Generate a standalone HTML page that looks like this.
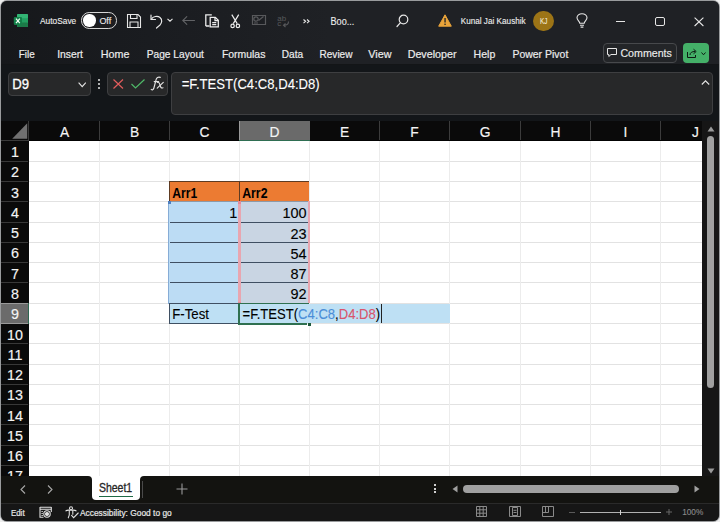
<!DOCTYPE html><html><head><meta charset="utf-8"><style>
*{margin:0;padding:0;box-sizing:border-box}
html,body{width:720px;height:522px;overflow:hidden;background:#eeeeee}
#ring{position:absolute;left:0;top:0;width:720px;height:522px;border-radius:7px;background:#999b9d}
body{position:relative;font-family:"Liberation Sans",sans-serif}
#win{position:absolute;left:1px;top:1px;width:718px;height:520px;border-radius:6px;background:#1f2125;overflow:hidden}
#c{position:absolute;left:-1px;top:-1px;width:720px;height:522px}
.a{position:absolute}
svg{position:absolute;overflow:visible}
#txt{left:0;top:0;font-family:"Liberation Sans",sans-serif}
</style></head><body><div id="ring"></div><div id="win"><div id="c">
<div class="a" style="left:0px;top:0px;width:720px;height:65px;background:linear-gradient(90deg,#16181b 0px,#1a1c20 150px,#1f2125 330px,#1f2125 720px)"></div>
<div class="a" style="left:0px;top:64px;width:720px;height:1px;background:#131517"></div>
<div class="a" style="left:0px;top:65px;width:720px;height:56px;background:#131619"></div>
<svg style="left:13px;top:13px" width="16" height="15" viewBox="0 0 16 15" ><rect x="4" y="0.9" width="11" height="13.2" rx="1.2" fill="#23a061"/>
<rect x="4" y="0.9" width="11" height="4.4" rx="1.2" fill="#33b574"/>
<rect x="4" y="9.6" width="11" height="4.5" rx="1" fill="#1c7a48"/>
<rect x="0.8" y="3.9" width="8.2" height="8" rx="1.1" fill="#138049"/>
<path d="M3 5.6 L6.8 10.2 M6.8 5.6 L3 10.2" stroke="#f0fff4" stroke-width="1.2"/></svg>
<div class="a" style="left:80.8px;top:12.4px;width:36.4px;height:16.4px;border:1.4px solid #d6d6d6;border-radius:8.2px;background:#1c1d20"></div>
<div class="a" style="left:83.3px;top:14.4px;width:12.4px;height:12.4px;background:#fff;border-radius:50%"></div>
<svg style="left:126px;top:13px" width="16" height="16" viewBox="0 0 16 16" fill="none" stroke="#e6e6e6" stroke-width="1.1"><path d="M1.5 1.5 H12 L14.5 4 V14.5 H1.5 Z"/><path d="M4.5 1.5 V5.5 H11 V1.5"/><path d="M4 14.5 V9 H12 V14.5"/></svg>
<svg style="left:149px;top:13px" width="16" height="16" viewBox="0 0 16 16" fill="none" stroke="#e6e6e6" stroke-width="1.2" stroke-linecap="round" stroke-linejoin="round"><path d="M2 2 V6.5 H6.5"/><path d="M2.3 6.3 C4 3.3 8.5 2.5 11 4.5 C13.5 6.5 13 10 11 12 L7.5 15"/></svg>
<svg style="left:167px;top:18px" width="6" height="4" viewBox="0 0 6 4" fill="none" stroke="#e6e6e6" stroke-width="1.1"><path d="M0.5 0.8 L3 3.2 L5.5 0.8"/></svg>
<svg style="left:181.5px;top:16px" width="13" height="9" viewBox="0 0 13 9" fill="none" stroke="#626366" stroke-width="1.1" stroke-linecap="round"><path d="M12.5 4.5 H0.8 M4.8 0.6 L0.8 4.5 L4.8 8.4"/></svg>
<svg style="left:204px;top:13px" width="16" height="16" viewBox="0 0 16 16" fill="none" stroke="#ececec" stroke-width="1.3"><path d="M1.8 13 V1.8 H7.8"/><path d="M1.8 13 H5.5"/><path d="M6.2 4.3 H11.3 L14.3 7.3 V13.9 H6.2 Z"/><path d="M11 4.5 V7.6 H14"/><path d="M8.2 9.6 H12.3 M8.2 11.6 H12.3"/></svg>
<svg style="left:230px;top:13.5px" width="10.5" height="15" viewBox="0 0 10.5 15" fill="none" stroke="#ececec" stroke-width="1.2"><path d="M1.8 0.6 L7.2 9.6 M8.7 0.6 L3.3 9.6"/><circle cx="2.6" cy="11.9" r="1.7"/><circle cx="7.9" cy="11.9" r="1.7"/></svg>
<svg style="left:251px;top:14px" width="16" height="12" viewBox="0 0 16 12" fill="none" stroke="#58595c" stroke-width="1.2"><path d="M1.5 1.5 H14.5 V10.5 H1.5 Z"/><circle cx="5" cy="5" r="2.2"/><path d="M7.5 6.5 L12.5 2.5"/><path d="M3 9 H7"/></svg>
<svg style="left:277px;top:14px" width="13" height="13" viewBox="0 0 13 13" ><text x="0.3" y="6.8" font-size="8" fill="#58595c" font-family="Liberation Sans">ab</text><text x="0.3" y="12.3" font-size="8" fill="#58595c" font-family="Liberation Sans">c</text><path d="M11.5 7.5 C11.5 10 10 11.3 7 11.3 M8.5 9.5 L6.5 11.3 L8.5 13" fill="none" stroke="#58595c" stroke-width="1.1"/></svg>
<svg style="left:302.5px;top:19.2px" width="7" height="4.6" viewBox="0 0 7 4.6" fill="none" stroke="#e6e6e6" stroke-width="1.1"><path d="M0.5 0.5 L2.6 2.3 L0.5 4.1 M4 0.5 L6.1 2.3 L4 4.1"/></svg>
<svg style="left:396px;top:14px" width="13" height="14" viewBox="0 0 13 14" fill="none" stroke="#e6e6e6" stroke-width="1.2"><circle cx="7.5" cy="5.5" r="4.3"/><path d="M4.5 8.7 L1 12.5" stroke-linecap="round"/></svg>
<svg style="left:438px;top:14px" width="14" height="13" viewBox="0 0 14 13" ><path d="M7 0.8 L13.3 12.2 H0.7 Z" fill="#e9a43a" stroke="#e9a43a" stroke-linejoin="round"/><rect x="6.4" y="4" width="1.3" height="4.5" fill="#1f2125"/><rect x="6.4" y="9.6" width="1.3" height="1.4" fill="#1f2125"/></svg>
<div class="a" style="left:533.3px;top:10.7px;width:20.8px;height:20.8px;background:#9c7416;border-radius:50%"></div>
<svg style="left:575.5px;top:13px" width="12" height="15" viewBox="0 0 12 15" fill="none" stroke="#e6e6e6" stroke-width="1.1"><path d="M3.8 10.3 C3.8 8.3 1 7.3 1 4.8 C1 2.4 3.2 0.8 6 0.8 C8.8 0.8 11 2.4 11 4.8 C11 7.3 8.2 8.3 8.2 10.3 Z"/><path d="M4 12.2 H8 M4.6 14.1 H7.4"/></svg>
<div class="a" style="left:615.5px;top:20.5px;width:9.5px;height:1.1px;background:#e6e6e6"></div>
<div class="a" style="left:655px;top:16.5px;width:9.5px;height:9px;border:1.1px solid #e6e6e6;border-radius:2px"></div>
<svg style="left:694px;top:16.5px" width="10" height="9.5" viewBox="0 0 10 9.5" stroke="#e6e6e6" stroke-width="1.1"><path d="M0.6 0.6 L9.4 9 M9.4 0.6 L0.6 9"/></svg>
<div class="a" style="left:603px;top:43px;width:74px;height:19.5px;border:1px solid #47494c;border-radius:4px;background:#232528"></div>
<svg style="left:607px;top:48px" width="10" height="9" viewBox="0 0 10 9" fill="none" stroke="#e6e6e6" stroke-width="1"><path d="M0.5 0.5 H9.5 V6.5 H4 L1.8 8.5 V6.5 H0.5 Z"/></svg>
<div class="a" style="left:683px;top:43px;width:26px;height:19.5px;background:#44b068;border-radius:4px"></div>
<svg style="left:687px;top:48px" width="10" height="10" viewBox="0 0 10 10" fill="none" stroke="#0d1a12" stroke-width="1"><path d="M0.5 4 V9.5 H8.5 V7"/><path d="M3 7 C3 4.5 5 3.5 8 3.5 M6.5 1.2 L9.2 3.5 L6.5 5.8"/></svg>
<svg style="left:701px;top:52px" width="5" height="3.5" viewBox="0 0 5 3.5" fill="none" stroke="#0d1a12" stroke-width="1"><path d="M0.5 0.5 L2.5 2.8 L4.5 0.5"/></svg>
<div class="a" style="left:7.5px;top:72px;width:83.5px;height:23.6px;border:1px solid #3e3f41;border-radius:4px;background:#272829"></div>
<svg style="left:78px;top:82px" width="9" height="5.5" viewBox="0 0 9 5.5" fill="none" stroke="#e6e6e6" stroke-width="1.1"><path d="M0.6 0.6 L4.2 4.6 L7.8 0.6"/></svg>
<div class="a" style="left:98.2px;top:79.2px;width:2.2px;height:2.2px;background:#e6e6e6;border-radius:50%"></div>
<div class="a" style="left:98.2px;top:83.2px;width:2.2px;height:2.2px;background:#e6e6e6;border-radius:50%"></div>
<div class="a" style="left:98.2px;top:87.2px;width:2.2px;height:2.2px;background:#e6e6e6;border-radius:50%"></div>
<div class="a" style="left:107px;top:72px;width:61px;height:23.6px;border:1px solid #3e3f41;border-radius:4px;background:#272829"></div>
<svg style="left:113px;top:79px" width="11" height="10" viewBox="0 0 11 10" stroke="#e05c5c" stroke-width="1.2"><path d="M0.5 0.5 L10 9.5 M10 0.5 L0.5 9.5"/></svg>
<svg style="left:131px;top:79px" width="14" height="10" viewBox="0 0 14 10" fill="none" stroke="#4fb868" stroke-width="1.2"><path d="M0.5 5 L4.5 9 L13.5 0.5"/></svg>
<svg style="left:150px;top:76px" width="15" height="15" viewBox="0 0 15 15" fill="none" stroke="#e2e2e2" stroke-width="1.15" stroke-linecap="round"><path d="M1.2 13.4 C2.2 14.2 3.4 13.8 3.9 12 L6.1 3.6 C6.6 1.7 8.1 0.7 10.3 1.4"/><path d="M4.2 5.6 H8.6"/><path d="M7.6 6.5 C8.4 6 9 6.4 9.4 7.4 L10.6 10.8 C11 11.9 11.8 12.3 13 11.8"/><path d="M13.3 6.4 L7.2 12.2"/></svg>
<div class="a" style="left:171px;top:72px;width:542px;height:43px;border:1px solid #3e3f41;border-radius:4px;background:#272829"></div>
<svg style="left:700.5px;top:80px" width="9" height="5" viewBox="0 0 9 5" fill="none" stroke="#e6e6e6" stroke-width="1.1"><path d="M0.8 4.5 L4.5 0.8 L8.2 4.5"/></svg>
<svg style="left:0;top:0" width="720" height="522" viewBox="0 0 720 522"><text x="40.00" y="24.00" font-size="8.72" fill="#ececec" stroke="#ececec" stroke-width="0.12" textLength="36.20" lengthAdjust="spacingAndGlyphs">AutoSave</text><text x="99.40" y="24.00" font-size="9.30" fill="#ececec" stroke="#ececec" stroke-width="0.12" textLength="11.78" lengthAdjust="spacingAndGlyphs">Off</text><text x="330.50" y="25.00" font-size="11.19" fill="#ececec" stroke="#ececec" stroke-width="0.12" textLength="23.80" lengthAdjust="spacingAndGlyphs">Boo...</text><text x="460.70" y="24.20" font-size="9.01" fill="#ececec" stroke="#ececec" stroke-width="0.12" textLength="64.99" lengthAdjust="spacingAndGlyphs">Kunal Jai Kaushik</text><text x="540.00" y="24.30" font-size="9.59" fill="#f3ead8" stroke="#f3ead8" stroke-width="0.12" textLength="7.30" lengthAdjust="spacingAndGlyphs">KJ</text><text x="18.80" y="57.80" font-size="11.48" fill="#ececec" stroke="#ececec" stroke-width="0.2" textLength="16.00" lengthAdjust="spacingAndGlyphs">File</text><text x="57.20" y="57.80" font-size="11.48" fill="#ececec" stroke="#ececec" stroke-width="0.2" textLength="25.80" lengthAdjust="spacingAndGlyphs">Insert</text><text x="100.80" y="57.80" font-size="11.48" fill="#ececec" stroke="#ececec" stroke-width="0.2" textLength="28.59" lengthAdjust="spacingAndGlyphs">Home</text><text x="146.70" y="57.80" font-size="11.48" fill="#ececec" stroke="#ececec" stroke-width="0.2" textLength="57.20" lengthAdjust="spacingAndGlyphs">Page Layout</text><text x="221.90" y="57.80" font-size="11.48" fill="#ececec" stroke="#ececec" stroke-width="0.2" textLength="43.49" lengthAdjust="spacingAndGlyphs">Formulas</text><text x="281.80" y="57.80" font-size="11.48" fill="#ececec" stroke="#ececec" stroke-width="0.2" textLength="21.29" lengthAdjust="spacingAndGlyphs">Data</text><text x="319.50" y="57.80" font-size="11.48" fill="#ececec" stroke="#ececec" stroke-width="0.2" textLength="32.97" lengthAdjust="spacingAndGlyphs">Review</text><text x="368.30" y="57.80" font-size="11.48" fill="#ececec" stroke="#ececec" stroke-width="0.2" textLength="23.17" lengthAdjust="spacingAndGlyphs">View</text><text x="407.70" y="57.80" font-size="11.48" fill="#ececec" stroke="#ececec" stroke-width="0.2" textLength="48.80" lengthAdjust="spacingAndGlyphs">Developer</text><text x="473.60" y="57.80" font-size="11.48" fill="#ececec" stroke="#ececec" stroke-width="0.2" textLength="21.70" lengthAdjust="spacingAndGlyphs">Help</text><text x="512.40" y="57.80" font-size="11.48" fill="#ececec" stroke="#ececec" stroke-width="0.2" textLength="55.91" lengthAdjust="spacingAndGlyphs">Power Pivot</text><text x="620.40" y="57.30" font-size="11.63" fill="#ececec" stroke="#ececec" stroke-width="0.15" textLength="51.49" lengthAdjust="spacingAndGlyphs">Comments</text><text x="12.30" y="89.10" font-size="14.97" fill="#fff" stroke="#fff" stroke-width="0.3" textLength="16.80" lengthAdjust="spacingAndGlyphs">D9</text><text x="181.70" y="89.00" font-size="14.83" fill="#fff" stroke="#fff" stroke-width="0.12" textLength="138.00" lengthAdjust="spacingAndGlyphs">=F.TEST(C4:C8,D4:D8)</text></svg>
<div class="a" style="left:0px;top:121px;width:720px;height:355px;background:#161616"></div>
<div class="a" style="left:0px;top:121px;width:702px;height:20px;background:#0a0a0a"></div>
<div class="a" style="left:0px;top:141px;width:29px;height:335px;background:#0a0a0a"></div>
<div class="a" style="left:29px;top:141px;width:673px;height:335px;background:#fff"></div>
<svg style="left:12px;top:123px" width="16" height="16" viewBox="0 0 16 16" ><path d="M15.2 0.2 V15.8 H0.2 Z" fill="#707070"/></svg>
<div class="a" style="left:99px;top:121px;width:1px;height:20px;background:#3c3c3c"></div>
<div class="a" style="left:169px;top:121px;width:1px;height:20px;background:#3c3c3c"></div>
<div class="a" style="left:239px;top:121px;width:1px;height:20px;background:#3c3c3c"></div>
<div class="a" style="left:309px;top:121px;width:1px;height:20px;background:#3c3c3c"></div>
<div class="a" style="left:379px;top:121px;width:1px;height:20px;background:#3c3c3c"></div>
<div class="a" style="left:449px;top:121px;width:1px;height:20px;background:#3c3c3c"></div>
<div class="a" style="left:520px;top:121px;width:1px;height:20px;background:#3c3c3c"></div>
<div class="a" style="left:590px;top:121px;width:1px;height:20px;background:#3c3c3c"></div>
<div class="a" style="left:660px;top:121px;width:1px;height:20px;background:#3c3c3c"></div>
<div class="a" style="left:29px;top:140px;width:673px;height:1px;background:#030303"></div>
<div class="a" style="left:0px;top:140px;width:28px;height:1px;background:#3a3a3a"></div>
<div class="a" style="left:28px;top:121px;width:1px;height:20px;background:#3a3a3a"></div>
<div class="a" style="left:0px;top:161px;width:28px;height:1px;background:#383838"></div>
<div class="a" style="left:29px;top:161px;width:673px;height:1px;background:#e2e2e2"></div>
<div class="a" style="left:0px;top:181px;width:28px;height:1px;background:#383838"></div>
<div class="a" style="left:29px;top:181px;width:673px;height:1px;background:#e2e2e2"></div>
<div class="a" style="left:0px;top:201px;width:28px;height:1px;background:#383838"></div>
<div class="a" style="left:29px;top:201px;width:673px;height:1px;background:#e2e2e2"></div>
<div class="a" style="left:0px;top:222px;width:28px;height:1px;background:#383838"></div>
<div class="a" style="left:29px;top:222px;width:673px;height:1px;background:#e2e2e2"></div>
<div class="a" style="left:0px;top:242px;width:28px;height:1px;background:#383838"></div>
<div class="a" style="left:29px;top:242px;width:673px;height:1px;background:#e2e2e2"></div>
<div class="a" style="left:0px;top:262px;width:28px;height:1px;background:#383838"></div>
<div class="a" style="left:29px;top:262px;width:673px;height:1px;background:#e2e2e2"></div>
<div class="a" style="left:0px;top:282px;width:28px;height:1px;background:#383838"></div>
<div class="a" style="left:29px;top:282px;width:673px;height:1px;background:#e2e2e2"></div>
<div class="a" style="left:0px;top:303px;width:28px;height:1px;background:#383838"></div>
<div class="a" style="left:29px;top:303px;width:673px;height:1px;background:#e2e2e2"></div>
<div class="a" style="left:0px;top:323px;width:28px;height:1px;background:#383838"></div>
<div class="a" style="left:29px;top:323px;width:673px;height:1px;background:#e2e2e2"></div>
<div class="a" style="left:0px;top:343px;width:28px;height:1px;background:#383838"></div>
<div class="a" style="left:29px;top:343px;width:673px;height:1px;background:#e2e2e2"></div>
<div class="a" style="left:0px;top:364px;width:28px;height:1px;background:#383838"></div>
<div class="a" style="left:29px;top:364px;width:673px;height:1px;background:#e2e2e2"></div>
<div class="a" style="left:0px;top:384px;width:28px;height:1px;background:#383838"></div>
<div class="a" style="left:29px;top:384px;width:673px;height:1px;background:#e2e2e2"></div>
<div class="a" style="left:0px;top:404px;width:28px;height:1px;background:#383838"></div>
<div class="a" style="left:29px;top:404px;width:673px;height:1px;background:#e2e2e2"></div>
<div class="a" style="left:0px;top:424px;width:28px;height:1px;background:#383838"></div>
<div class="a" style="left:29px;top:424px;width:673px;height:1px;background:#e2e2e2"></div>
<div class="a" style="left:0px;top:445px;width:28px;height:1px;background:#383838"></div>
<div class="a" style="left:29px;top:445px;width:673px;height:1px;background:#e2e2e2"></div>
<div class="a" style="left:0px;top:465px;width:28px;height:1px;background:#383838"></div>
<div class="a" style="left:29px;top:465px;width:673px;height:1px;background:#e2e2e2"></div>
<div class="a" style="left:99px;top:141px;width:1px;height:335px;background:#ececec"></div>
<div class="a" style="left:169px;top:141px;width:1px;height:335px;background:#ececec"></div>
<div class="a" style="left:239px;top:141px;width:1px;height:335px;background:#ececec"></div>
<div class="a" style="left:309px;top:141px;width:1px;height:335px;background:#ececec"></div>
<div class="a" style="left:379px;top:141px;width:1px;height:335px;background:#ececec"></div>
<div class="a" style="left:449px;top:141px;width:1px;height:335px;background:#ececec"></div>
<div class="a" style="left:520px;top:141px;width:1px;height:335px;background:#ececec"></div>
<div class="a" style="left:590px;top:141px;width:1px;height:335px;background:#ececec"></div>
<div class="a" style="left:660px;top:141px;width:1px;height:335px;background:#ececec"></div>
<div class="a" style="left:239px;top:121px;width:71px;height:19px;background:#6a6a6a"></div>
<div class="a" style="left:239px;top:121px;width:1px;height:19px;background:#9a9a9a"></div>
<div class="a" style="left:239px;top:140px;width:71px;height:1px;background:#2f6e52"></div>
<div class="a" style="left:0px;top:303px;width:28px;height:21px;background:#6b6b6b"></div>
<div class="a" style="left:0px;top:303px;width:28px;height:1px;background:#9a9a9a"></div>
<div class="a" style="left:0px;top:323px;width:28px;height:1px;background:#9a9a9a"></div>
<div class="a" style="left:28px;top:303px;width:1px;height:21px;background:#2f6650"></div>
<div class="a" style="left:169px;top:182px;width:140px;height:19px;background:#ec7b32"></div>
<div class="a" style="left:169px;top:181px;width:140px;height:1px;background:#5e3b22"></div>
<div class="a" style="left:169px;top:181px;width:1px;height:20px;background:#5e3b22"></div>
<div class="a" style="left:239px;top:181px;width:1px;height:20px;background:#5e3b22"></div>
<div class="a" style="left:169px;top:201px;width:140px;height:1px;background:#8d99a6"></div>
<div class="a" style="left:168px;top:202px;width:71px;height:101px;background:#bcdcf4"></div>
<div class="a" style="left:239px;top:202px;width:70px;height:101px;background:#c9d5e3"></div>
<div class="a" style="left:170px;top:222px;width:139px;height:1px;background:#3f4f62"></div>
<div class="a" style="left:170px;top:242px;width:139px;height:1px;background:#3f4f62"></div>
<div class="a" style="left:170px;top:262px;width:139px;height:1px;background:#3f4f62"></div>
<div class="a" style="left:170px;top:282px;width:139px;height:1px;background:#3f4f62"></div>
<div class="a" style="left:170px;top:303px;width:69px;height:1px;background:#3f4f62"></div>
<div class="a" style="left:169px;top:304px;width:281px;height:19px;background:#bee0f4"></div>
<div class="a" style="left:169px;top:303px;width:1px;height:21px;background:#3f4f62"></div>
<div class="a" style="left:169px;top:323px;width:70px;height:1px;background:#3f4f62"></div>
<div class="a" style="left:168px;top:202px;width:1px;height:102px;background:#86acd6"></div>
<div class="a" style="left:168px;top:201px;width:2.5px;height:2.5px;background:#4f7fc0"></div>
<div class="a" style="left:238px;top:201px;width:3px;height:102px;background:#e8a6b0"></div>
<div class="a" style="left:308px;top:201px;width:2px;height:102px;background:#e8a6b0"></div>
<div class="a" style="left:238px;top:200.5px;width:3px;height:3px;background:#e48a9a"></div>
<div class="a" style="left:238px;top:302px;width:3px;height:2px;background:#e48a9a"></div>
<div class="a" style="left:239px;top:303px;width:70px;height:1px;background:#2f7050"></div>
<div class="a" style="left:238px;top:303px;width:2px;height:22px;background:#2f7050"></div>
<div class="a" style="left:238px;top:323px;width:69px;height:2px;background:#2f7050"></div>
<div class="a" style="left:308px;top:323px;width:3px;height:3px;background:#1f5a3c"></div>
<div class="a" style="left:381.2px;top:304px;width:1.1px;height:19px;background:#222"></div>
<svg style="left:0;top:0" width="720" height="522" viewBox="0 0 720 522"><defs><clipPath id="gc"><rect x="0" y="121" width="702" height="355"/></clipPath></defs><g clip-path="url(#gc)"><text x="59.90" y="136.60" font-size="13.80" fill="#f4f4f4" stroke="#f4f4f4" stroke-width="0.15" textLength="9.20" lengthAdjust="spacingAndGlyphs">A</text><text x="129.90" y="136.60" font-size="13.80" fill="#f4f4f4" stroke="#f4f4f4" stroke-width="0.15" textLength="9.20" lengthAdjust="spacingAndGlyphs">B</text><text x="199.52" y="136.60" font-size="13.80" fill="#f4f4f4" stroke="#f4f4f4" stroke-width="0.15" textLength="9.97" lengthAdjust="spacingAndGlyphs">C</text><text x="269.52" y="136.60" font-size="13.80" fill="#f4f4f4" stroke="#f4f4f4" stroke-width="0.15" textLength="9.97" lengthAdjust="spacingAndGlyphs">D</text><text x="339.90" y="136.60" font-size="13.80" fill="#f4f4f4" stroke="#f4f4f4" stroke-width="0.15" textLength="9.20" lengthAdjust="spacingAndGlyphs">E</text><text x="410.28" y="136.60" font-size="13.80" fill="#f4f4f4" stroke="#f4f4f4" stroke-width="0.15" textLength="8.43" lengthAdjust="spacingAndGlyphs">F</text><text x="479.63" y="136.60" font-size="13.80" fill="#f4f4f4" stroke="#f4f4f4" stroke-width="0.15" textLength="10.73" lengthAdjust="spacingAndGlyphs">G</text><text x="550.52" y="136.60" font-size="13.80" fill="#f4f4f4" stroke="#f4f4f4" stroke-width="0.15" textLength="9.97" lengthAdjust="spacingAndGlyphs">H</text><text x="623.58" y="136.60" font-size="13.80" fill="#f4f4f4" stroke="#f4f4f4" stroke-width="0.15" textLength="3.83" lengthAdjust="spacingAndGlyphs">I</text><text x="692.05" y="136.60" font-size="13.80" fill="#f4f4f4" stroke="#f4f4f4" stroke-width="0.15" textLength="6.90" lengthAdjust="spacingAndGlyphs">J</text><text x="11.02" y="157.13" font-size="14.30" fill="#f4f4f4" stroke="#f4f4f4" stroke-width="0.15" textLength="7.95" lengthAdjust="spacingAndGlyphs">1</text><text x="11.02" y="177.40" font-size="14.30" fill="#f4f4f4" stroke="#f4f4f4" stroke-width="0.15" textLength="7.95" lengthAdjust="spacingAndGlyphs">2</text><text x="11.02" y="197.66" font-size="14.30" fill="#f4f4f4" stroke="#f4f4f4" stroke-width="0.15" textLength="7.95" lengthAdjust="spacingAndGlyphs">3</text><text x="11.02" y="217.93" font-size="14.30" fill="#f4f4f4" stroke="#f4f4f4" stroke-width="0.15" textLength="7.95" lengthAdjust="spacingAndGlyphs">4</text><text x="11.02" y="238.20" font-size="14.30" fill="#f4f4f4" stroke="#f4f4f4" stroke-width="0.15" textLength="7.95" lengthAdjust="spacingAndGlyphs">5</text><text x="11.02" y="258.46" font-size="14.30" fill="#f4f4f4" stroke="#f4f4f4" stroke-width="0.15" textLength="7.95" lengthAdjust="spacingAndGlyphs">6</text><text x="11.02" y="278.73" font-size="14.30" fill="#f4f4f4" stroke="#f4f4f4" stroke-width="0.15" textLength="7.95" lengthAdjust="spacingAndGlyphs">7</text><text x="11.02" y="299.00" font-size="14.30" fill="#f4f4f4" stroke="#f4f4f4" stroke-width="0.15" textLength="7.95" lengthAdjust="spacingAndGlyphs">8</text><text x="11.02" y="319.27" font-size="14.30" fill="#f4f4f4" stroke="#f4f4f4" stroke-width="0.15" textLength="7.95" lengthAdjust="spacingAndGlyphs">9</text><text x="7.05" y="339.53" font-size="14.30" fill="#f4f4f4" stroke="#f4f4f4" stroke-width="0.15" textLength="15.91" lengthAdjust="spacingAndGlyphs">10</text><text x="7.58" y="359.80" font-size="14.30" fill="#f4f4f4" stroke="#f4f4f4" stroke-width="0.15" textLength="14.84" lengthAdjust="spacingAndGlyphs">11</text><text x="7.05" y="380.07" font-size="14.30" fill="#f4f4f4" stroke="#f4f4f4" stroke-width="0.15" textLength="15.91" lengthAdjust="spacingAndGlyphs">12</text><text x="7.05" y="400.33" font-size="14.30" fill="#f4f4f4" stroke="#f4f4f4" stroke-width="0.15" textLength="15.91" lengthAdjust="spacingAndGlyphs">13</text><text x="7.05" y="420.60" font-size="14.30" fill="#f4f4f4" stroke="#f4f4f4" stroke-width="0.15" textLength="15.91" lengthAdjust="spacingAndGlyphs">14</text><text x="7.05" y="440.87" font-size="14.30" fill="#f4f4f4" stroke="#f4f4f4" stroke-width="0.15" textLength="15.91" lengthAdjust="spacingAndGlyphs">15</text><text x="7.05" y="461.13" font-size="14.30" fill="#f4f4f4" stroke="#f4f4f4" stroke-width="0.15" textLength="15.91" lengthAdjust="spacingAndGlyphs">16</text><text x="7.05" y="481.40" font-size="14.30" fill="#f4f4f4" stroke="#f4f4f4" stroke-width="0.15" textLength="15.91" lengthAdjust="spacingAndGlyphs">17</text><text x="172.20" y="197.60" font-size="14.53" fill="#000" stroke="#000" stroke-width="0" textLength="25.00" lengthAdjust="spacingAndGlyphs" font-weight="bold">Arr1</text><text x="242.20" y="197.60" font-size="14.53" fill="#000" stroke="#000" stroke-width="0" textLength="25.30" lengthAdjust="spacingAndGlyphs" font-weight="bold">Arr2</text><text x="229.37" y="218.30" font-size="14.50" fill="#000" stroke="#000" stroke-width="0.12" textLength="8.06" lengthAdjust="spacingAndGlyphs">1</text><text x="282.41" y="218.23" font-size="14.50" fill="#000" stroke="#000" stroke-width="0.12" textLength="24.19" lengthAdjust="spacingAndGlyphs">100</text><text x="290.48" y="238.50" font-size="14.50" fill="#000" stroke="#000" stroke-width="0.12" textLength="16.13" lengthAdjust="spacingAndGlyphs">23</text><text x="290.48" y="258.76" font-size="14.50" fill="#000" stroke="#000" stroke-width="0.12" textLength="16.13" lengthAdjust="spacingAndGlyphs">54</text><text x="290.48" y="279.03" font-size="14.50" fill="#000" stroke="#000" stroke-width="0.12" textLength="16.13" lengthAdjust="spacingAndGlyphs">87</text><text x="290.48" y="299.30" font-size="14.50" fill="#000" stroke="#000" stroke-width="0.12" textLength="16.13" lengthAdjust="spacingAndGlyphs">92</text><text x="172.30" y="319.20" font-size="14.53" fill="#000" stroke="#000" stroke-width="0.12" textLength="36.70" lengthAdjust="spacingAndGlyphs">F-Test</text><text x="242.60" y="319.20" font-size="14.97" textLength="137.50" lengthAdjust="spacingAndGlyphs" stroke-width="0.12"><tspan fill="#000" stroke="#000">=F.TEST(</tspan><tspan fill="#4a8ed8" stroke="#4a8ed8">C4:C8</tspan><tspan fill="#000" stroke="#000">,</tspan><tspan fill="#d9546c" stroke="#d9546c">D4:D8</tspan><tspan fill="#000" stroke="#000">)</tspan></text></g></svg>
<svg style="left:707px;top:126px" width="8" height="6" viewBox="0 0 8 6" ><path d="M0.5 5.5 L4 0.5 L7.5 5.5 Z" fill="#9a9a9a"/></svg>
<div class="a" style="left:707px;top:135.5px;width:7px;height:252.5px;background:#a0a0a0;border-radius:3.5px"></div>
<svg style="left:707px;top:468px" width="8" height="6" viewBox="0 0 8 6" ><path d="M0.5 0.5 L4 5.5 L7.5 0.5 Z" fill="#9a9a9a"/></svg>
<div class="a" style="left:0px;top:476px;width:720px;height:27px;background:#131310"></div>
<div class="a" style="left:86px;top:476px;width:60px;height:5px;background:#fff"></div>
<div class="a" style="left:0px;top:476px;width:92px;height:27px;background:#131310;border-top-right-radius:4px"></div>
<div class="a" style="left:140px;top:476px;width:580px;height:27px;background:#131310;border-top-left-radius:4px"></div>
<div class="a" style="left:92px;top:476px;width:48px;height:24px;background:#fff;border-radius:0 0 4px 4px"></div>
<div class="a" style="left:99px;top:495.8px;width:34px;height:1.6px;background:#1d6a45"></div>
<div class="a" style="left:141.5px;top:481px;width:1px;height:17px;background:#4a4a4a"></div>
<svg style="left:20px;top:484.5px" width="6" height="9" viewBox="0 0 6 9" fill="none" stroke="#a8a8a8" stroke-width="1.1"><path d="M5 0.5 L1 4.5 L5 8.5"/></svg>
<svg style="left:46.5px;top:484.5px" width="6" height="9" viewBox="0 0 6 9" fill="none" stroke="#a8a8a8" stroke-width="1.1"><path d="M1 0.5 L5 4.5 L1 8.5"/></svg>
<svg style="left:176px;top:483px" width="12" height="12" viewBox="0 0 12 12" stroke="#9a9a9a" stroke-width="1.1"><path d="M6 0.5 V11.5 M0.5 6 H11.5"/></svg>
<div class="a" style="left:434px;top:484px;width:2px;height:2px;background:#d0d0d0"></div>
<div class="a" style="left:434px;top:487.5px;width:2px;height:2px;background:#d0d0d0"></div>
<div class="a" style="left:434px;top:491px;width:2px;height:2px;background:#d0d0d0"></div>
<svg style="left:452px;top:485px" width="6" height="8" viewBox="0 0 6 8" ><path d="M5.5 0.5 L0.5 4 L5.5 7.5 Z" fill="#a0a0a0"/></svg>
<div class="a" style="left:463px;top:485px;width:216px;height:8px;background:#a0a0a0;border-radius:4px"></div>
<svg style="left:694px;top:485px" width="6" height="8" viewBox="0 0 6 8" ><path d="M0.5 0.5 L5.5 4 L0.5 7.5 Z" fill="#a0a0a0"/></svg>
<div class="a" style="left:0px;top:503px;width:720px;height:19px;background:#161616"></div>
<div class="a" style="left:0px;top:503px;width:720px;height:1px;background:#2a2a2a"></div>
<svg style="left:39px;top:506px" width="14" height="12" viewBox="0 0 14 12" fill="none" stroke="#e0e0e0" stroke-width="1.1"><path d="M1 1.3 H12.3 M1 3.2 H12.3 M1 1 V11.3 H4.5 M12.3 1 V6"/><path d="M2.5 5.5 H3.8 M2.5 7.5 H3.8 M2.5 9.5 H3.8"/><circle cx="8" cy="8" r="3.2"/><circle cx="8" cy="8" r="1.5" fill="#e0e0e0"/></svg>
<svg style="left:64.5px;top:506px" width="14" height="13" viewBox="0 0 14 13" fill="none" stroke="#e0e0e0" stroke-width="1.1" stroke-linecap="round"><circle cx="6" cy="2.2" r="1.5"/><path d="M1 4.8 C2.5 3.6 4.5 4.3 6 4.3 C7.5 4.3 9.5 3.6 11 4.8"/><path d="M4.3 4.6 C4.6 7.5 4.3 10 3.3 11.8 M7.8 4.6 V8.2"/><path d="M6.6 9.4 L8.6 11.6 L13.2 7"/></svg>
<svg style="left:476px;top:506px" width="11" height="11" viewBox="0 0 11 11" fill="none" stroke="#8a8a8a" stroke-width="1"><path d="M0.5 0.5 H10.5 V10.5 H0.5 Z M0.5 3.8 H10.5 M0.5 7.2 H10.5 M3.8 0.5 V10.5 M7.2 0.5 V10.5"/></svg>
<svg style="left:509px;top:506px" width="12" height="11" viewBox="0 0 12 11" fill="none" stroke="#8a8a8a" stroke-width="1"><path d="M0.5 0.5 H11.5 V10.5 H0.5 Z M3.5 1.5 H8.5 V9.5 H3.5 Z M4.5 4.3 H7.5 M4.5 6.5 H7.5"/></svg>
<svg style="left:542px;top:506px" width="12" height="11" viewBox="0 0 12 11" fill="none" stroke="#8a8a8a" stroke-width="1"><path d="M0.5 10.5 V0.5 H11.5 V10.5 Z M0.5 6.5 H6.5 V0.5 M3.5 0.5 V6.5"/></svg>
<div class="a" style="left:569px;top:512px;width:6px;height:1px;background:#5a5a5a"></div>
<div class="a" style="left:580px;top:511.5px;width:81px;height:1.5px;background:#b0b0b0"></div>
<div class="a" style="left:619.5px;top:510px;width:1.5px;height:5px;background:#d0d0d0"></div>
<svg style="left:666px;top:509px" width="6" height="6" viewBox="0 0 6 6" stroke="#666" stroke-width="1"><path d="M3 0 V6 M0 3 H6"/></svg>
<svg id="txt" width="720" height="522" viewBox="0 0 720 522"><text x="98.90" y="491.80" font-size="12.21" fill="#262626" stroke="#262626" stroke-width="0.3" textLength="33.30" lengthAdjust="spacingAndGlyphs">Sheet1</text><text x="10.90" y="515.50" font-size="9.45" fill="#e8e8e8" stroke="#e8e8e8" stroke-width="0.22" textLength="13.70" lengthAdjust="spacingAndGlyphs">Edit</text><text x="80.00" y="516.20" font-size="9.88" fill="#e8e8e8" stroke="#e8e8e8" stroke-width="0.22" textLength="91.70" lengthAdjust="spacingAndGlyphs">Accessibility: Good to go</text><text x="682.20" y="515.40" font-size="8.87" fill="#8a8a8a" stroke="#8a8a8a" stroke-width="0.12" textLength="21.10" lengthAdjust="spacingAndGlyphs">100%</text></svg>
</div></div></body></html>
